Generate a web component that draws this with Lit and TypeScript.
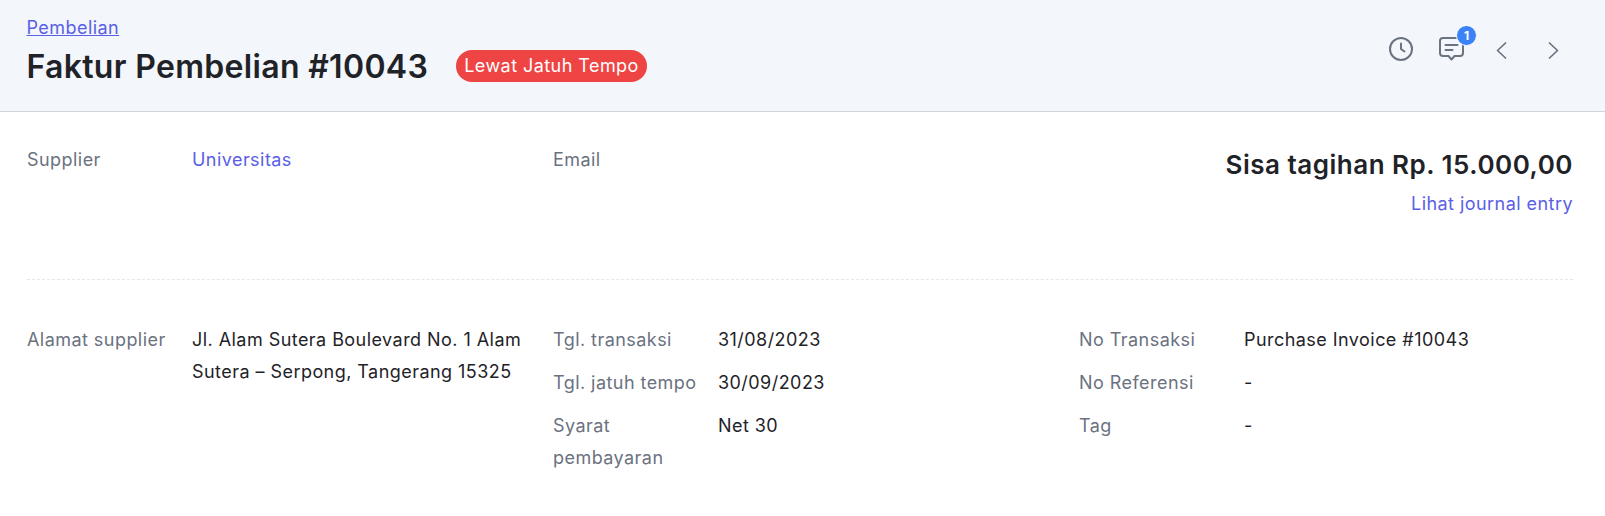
import { LitElement, html, css } from "lit";
import { customElement } from "lit/decorators.js";

@customElement("app-root")
export class AppRoot extends LitElement {
  static styles = css`
    :host { display: block; font-family: Inter, "Liberation Sans", sans-serif; font-size: 18px; letter-spacing: 0.025em; line-height: 32px; color: #1f2328; background: #fff; height: 516px; overflow: hidden; }
    a { color: #5a60e6; text-decoration: none; }
    .head { background: #f3f6fb; border-bottom: 1px solid #d1d5db; height: 112px; box-sizing: border-box; padding: 16px 42px 0 26.5px; display: flex; justify-content: space-between; }
    .crumb { display: block; line-height: 24px; text-decoration: underline; }
    .title-row { display: flex; align-items: center; gap: 28px; margin-top: 3px; height: 48px; }
    h1 { margin: 0; font-size: 32px; line-height: 48px; font-weight: 600; letter-spacing: 0.32px; color: #1f2328; }
    .badge { background: #ef4444; color: #fff; border-radius: 16px; padding: 0 8px; line-height: 32px; font-weight: 400; margin-bottom: 2px; }
    .actions { display: flex; align-items: center; gap: 26px; height: 66px; }
    .actions svg { display: block; width: 24px; height: 24px; fill: none; stroke: #6b7280; stroke-width: 2; stroke-linecap: round; stroke-linejoin: round; overflow: visible; }
    .actions svg.chev { stroke-width: 1.7; }
    .chat { position: relative; }
    .dot { position: absolute; top: -12px; right: -14px; width: 19px; height: 19px; border-radius: 50%; background: #3b82f6; color: #fff; font-size: 12px; letter-spacing: 0; font-weight: 700; line-height: 19px; text-align: center; border: 1px solid #fff; }
    .sec { padding: 0 32px 0 27px; display: grid; grid-template-columns: 526px 526px 1fr; }
    .top { height: 168px; padding: 32px 0 0; box-sizing: border-box; border-bottom: 1px dashed #e5e7eb; margin: 0 32px 0 27px; }
    .bottom { padding-top: 44px; }
    .field { display: grid; grid-template-columns: 165px 1fr; }
    .stack { display: flex; flex-direction: column; gap: 11px; }
    .lbl { color: #6b7280; padding-right: 12px; }
    .addr { width: 340px; }
    .sum { text-align: right; }
    .sum b { display: block; font-size: 26px; font-weight: 600; letter-spacing: 0.5px; line-height: 40px; margin: 1px 0 3px; }
  `;
  render() {
    return html`
      <div class="head">
        <div>
          <a class="crumb" href="#">Pembelian</a>
          <div class="title-row"><h1>Faktur Pembelian #10043</h1><span class="badge">Lewat Jatuh Tempo</span></div>
        </div>
        <div class="actions">
          <svg viewBox="0 0 24 24"><circle cx="12" cy="12" r="11"/><path d="M12 6.5V12l3.5 2.5"/></svg>
          <div class="chat"><svg viewBox="0 0 24 24"><path d="M4 1h17a3 3 0 0 1 3 3v12a3 3 0 0 1-3 3h-5.5l-3 3.5-3-3.5H4a3 3 0 0 1-3-3V4a3 3 0 0 1 3-3z"/><path d="M6.5 8h12M6.5 13h7"/></svg><span class="dot">1</span></div>
          <svg class="chev" viewBox="0 0 24 24"><path d="M16.5 6l-8 7.5 8 7.5"/></svg>
          <svg class="chev" viewBox="0 0 24 24"><path d="M10.5 6l8 7.5-8 7.5"/></svg>
        </div>
      </div>
      <div class="sec top">
        <div class="field"><span class="lbl">Supplier</span><a href="#">Universitas</a></div>
        <div class="field"><span class="lbl">Email</span><span></span></div>
        <div class="sum"><b>Sisa tagihan Rp. 15.000,00</b><a href="#">Lihat journal entry</a></div>
      </div>
      <div class="sec bottom">
        <div class="field"><span class="lbl">Alamat supplier</span><span class="addr">Jl. Alam Sutera Boulevard No. 1 Alam Sutera – Serpong, Tangerang 15325</span></div>
        <div class="stack">
          <div class="field"><span class="lbl">Tgl. transaksi</span><span>31/08/2023</span></div>
          <div class="field"><span class="lbl">Tgl. jatuh tempo</span><span>30/09/2023</span></div>
          <div class="field"><span class="lbl">Syarat pembayaran</span><span>Net 30</span></div>
        </div>
        <div class="stack">
          <div class="field"><span class="lbl">No Transaksi</span><span>Purchase Invoice #10043</span></div>
          <div class="field"><span class="lbl">No Referensi</span><span>-</span></div>
          <div class="field"><span class="lbl">Tag</span><span>-</span></div>
        </div>
      </div>
    `;
  }
}
